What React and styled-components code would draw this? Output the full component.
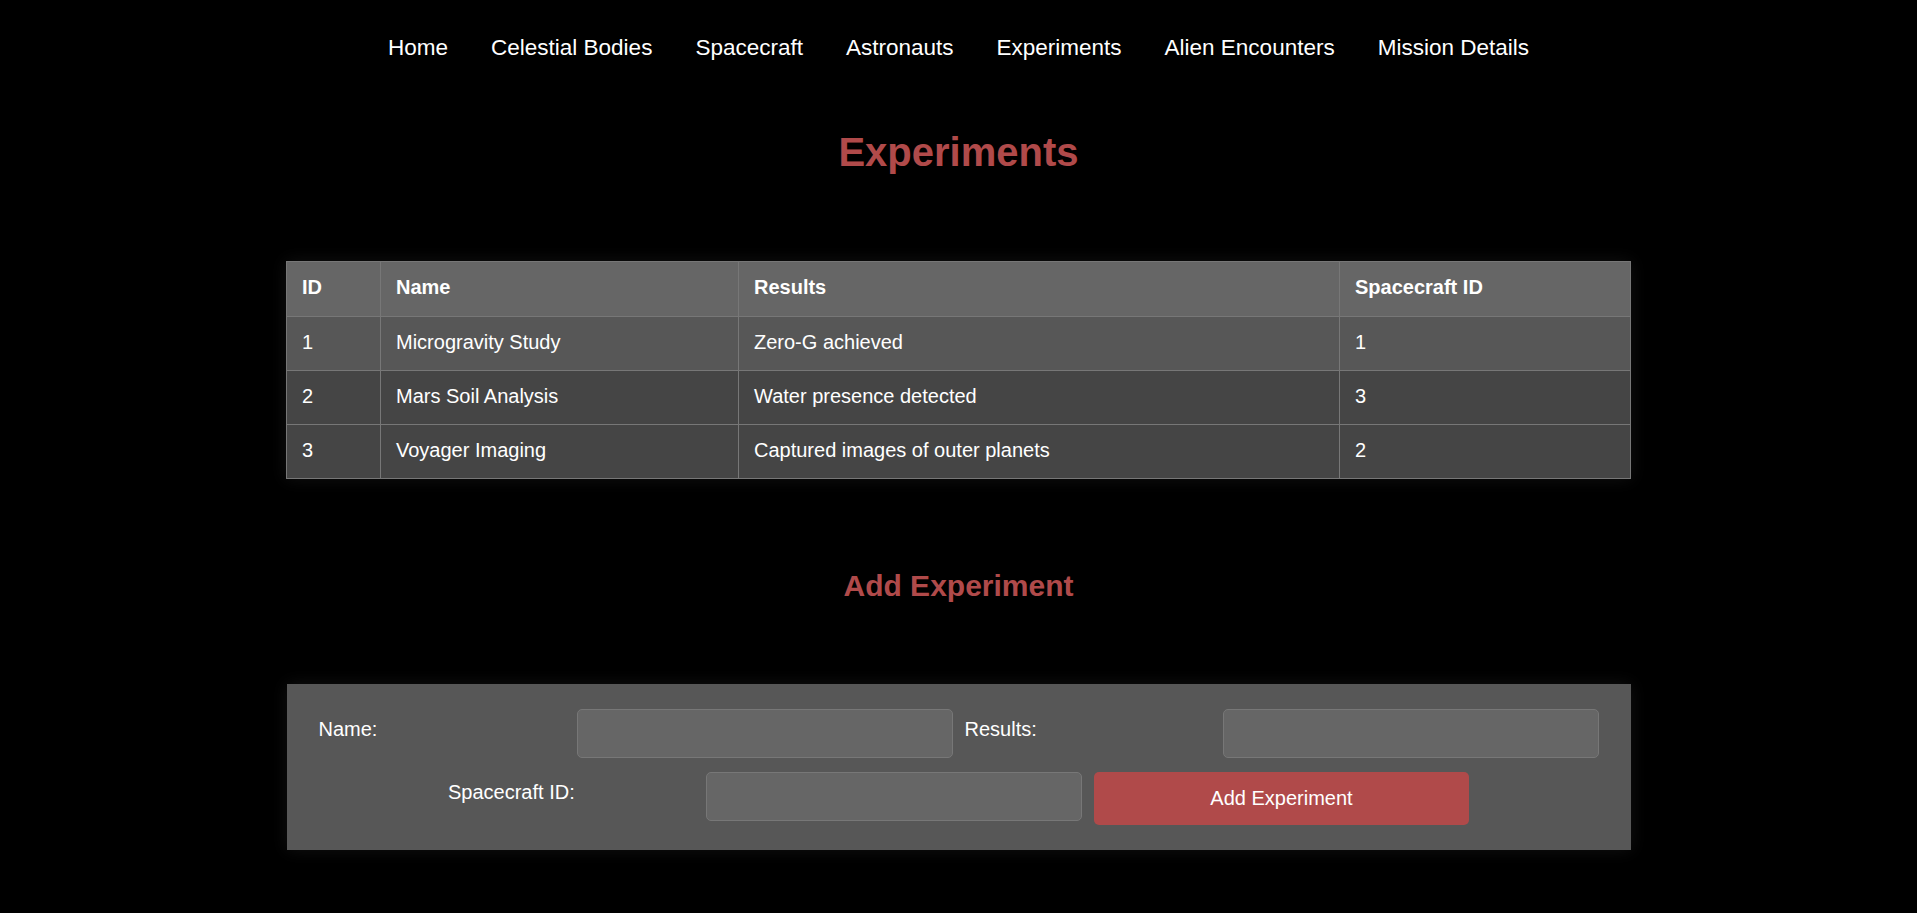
import React from "react";
import styled, { createGlobalStyle } from "styled-components";

const GlobalStyle = createGlobalStyle`
  body {
    margin: 0;
    background: #000000;
    color: #ffffff;
    font-family: "Liberation Sans", Arial, sans-serif;
  }
`;

const Page = styled.div`
  min-height: 913px;
  padding-bottom: 40px;
`;

const Nav = styled.nav`
  display: flex;
  justify-content: center;
  gap: 43px;
  padding-top: 35px;
`;

const NavLink = styled.a`
  color: #ffffff;
  text-decoration: none;
  font-size: 22.5px;
  cursor: pointer;
`;

const Title = styled.h1`
  margin: 69px 0 0;
  text-align: center;
  font-size: 40px;
  font-weight: bold;
  color: #b04a4a;
`;

const Table = styled.table`
  width: 1344px;
  margin: 86px auto 0;
  border-collapse: collapse;
  table-layout: fixed;
  box-shadow: 0 0 16px rgba(255, 255, 255, 0.07);
  font-size: 20px;
  line-height: 23px;
`;

const Th = styled.th`
  background: #666666;
  border: 1px solid #777777;
  padding: 14px 15px 17px;
  text-align: left;
  font-weight: bold;
  color: #ffffff;
`;

const Row = styled.tr`
  background: ${(props) => (props.$light ? "#575757" : "#454545")};
`;

const Td = styled.td`
  border: 1px solid #777777;
  padding: 14px 15px 16px;
  color: #ffffff;
`;

const SubTitle = styled.h2`
  margin: 90px 0 81px;
  text-align: center;
  font-size: 30px;
  font-weight: bold;
  color: #b04a4a;
`;

const FormPanel = styled.form`
  width: 1344px;
  box-sizing: border-box;
  margin: 0 auto;
  padding: 25px 32px;
  background: #575757;
  box-shadow: 0 0 16px rgba(255, 255, 255, 0.07);
  display: flex;
  flex-wrap: wrap;
  justify-content: center;
  align-items: flex-start;
  gap: 14px 12px;
`;

const Label = styled.label`
  width: 246px;
  padding-top: 9px;
  font-size: 20px;
  color: #ffffff;
`;

const Input = styled.input`
  width: 376px;
  height: 49px;
  box-sizing: border-box;
  background: #666666;
  border: 1px solid #777777;
  border-radius: 5px;
  color: #ffffff;
  font-size: 20px;
  padding: 0 12px;
`;

const Button = styled.button`
  width: 375px;
  height: 53px;
  border: none;
  border-radius: 5px;
  background: #b04a4a;
  color: #ffffff;
  font-family: "Liberation Sans", Arial, sans-serif;
  font-size: 20px;
  cursor: pointer;
`;

const links = [
  "Home",
  "Celestial Bodies",
  "Spacecraft",
  "Astronauts",
  "Experiments",
  "Alien Encounters",
  "Mission Details",
];

const experiments = [
  { id: 1, name: "Microgravity Study", results: "Zero-G achieved", craft: 1 },
  { id: 2, name: "Mars Soil Analysis", results: "Water presence detected", craft: 3 },
  { id: 3, name: "Voyager Imaging", results: "Captured images of outer planets", craft: 2 },
];

const App = () => {
  return (
    <Page>
      <GlobalStyle />
      <Nav>
        {links.map((l) => (
          <NavLink key={l}>{l}</NavLink>
        ))}
      </Nav>

      <Title>Experiments</Title>

      <Table>
        <colgroup>
          <col style={{ width: 94 }} />
          <col style={{ width: 358 }} />
          <col style={{ width: 601 }} />
          <col style={{ width: 291 }} />
        </colgroup>
        <thead>
          <tr>
            <Th>ID</Th>
            <Th>Name</Th>
            <Th>Results</Th>
            <Th>Spacecraft ID</Th>
          </tr>
        </thead>
        <tbody>
          {experiments.map((e, i) => (
            <Row key={e.id} $light={i === 0}>
              <Td>{e.id}</Td>
              <Td>{e.name}</Td>
              <Td>{e.results}</Td>
              <Td>{e.craft}</Td>
            </Row>
          ))}
        </tbody>
      </Table>

      <SubTitle>Add Experiment</SubTitle>

      <FormPanel onSubmit={(ev) => ev.preventDefault()}>
        <Label>Name:</Label>
        <Input type="text" />
        <Label>Results:</Label>
        <Input type="text" />
        <Label>Spacecraft ID:</Label>
        <Input type="text" />
        <Button type="submit">Add Experiment</Button>
      </FormPanel>
    </Page>
  );
};

export default App;
